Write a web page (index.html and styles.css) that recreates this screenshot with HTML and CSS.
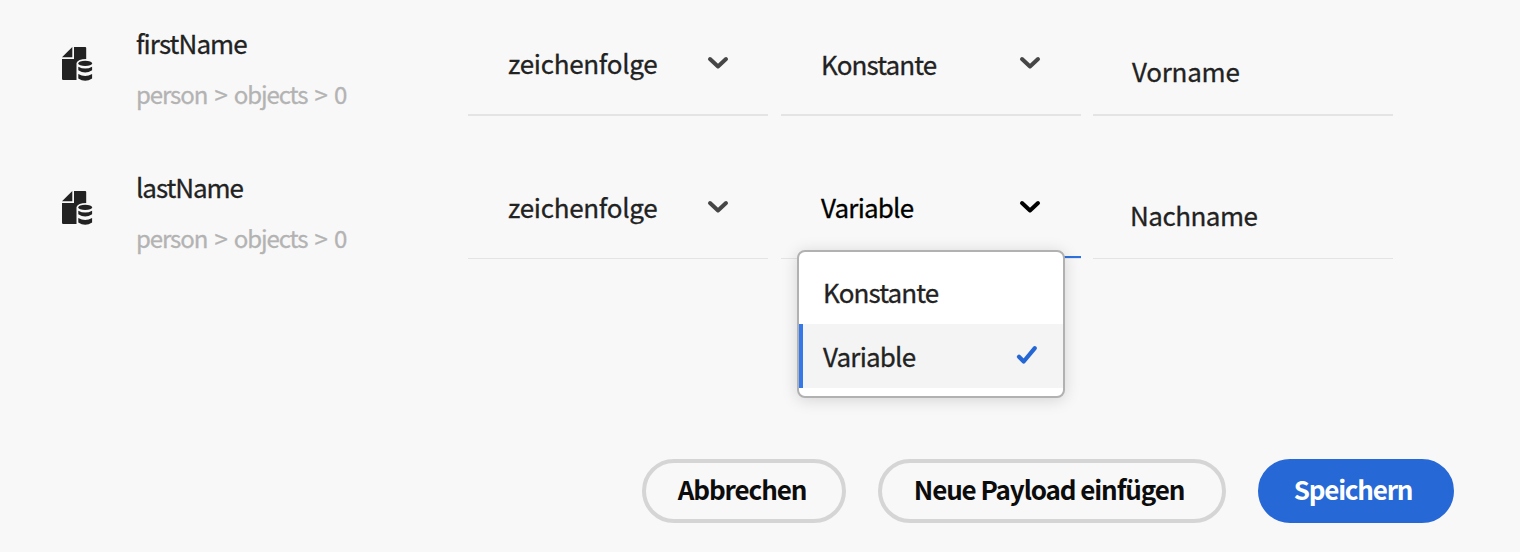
FILE: index.html
```html
<!DOCTYPE html>
<html lang="de">
<head>
<meta charset="utf-8">
<title>Payload</title>
<link rel="stylesheet" href="styles.css">
</head>
<body>
<svg class="defs" width="0" height="0" aria-hidden="true">
  <symbol id="data-doc" viewBox="0 0 32 36">
    <path d="M0 10.3 10.3 0v10.3z"/>
    <path d="M12 0h11.2q1 0 1 1v11Q16 12.200 14.500 16V33H1.200Q0 33 0 31.800V12h12z"/>
    <ellipse cx="23.200" cy="16.400" rx="6.900" ry="2.700"/>
    <path d="M16.300 19.700q6.900 3.800 13.800 0V23.200q-6.900 4.400-13.800 0zM16.300 26.900q6.900 4 13.800 0V31.500q-6.900 4.600-13.800 0z"/>
  </symbol>
  <symbol id="chevron" viewBox="0 0 22 14">
    <path d="M3 3 11 10.500 19 3" fill="none" stroke="currentColor" stroke-width="4" stroke-linecap="round" stroke-linejoin="round"/>
  </symbol>
</svg>
<main class="payload">
  <section class="row row-first">
    <svg class="doc-icon"><use href="#data-doc"/></svg>
    <div class="label"><div class="name first">firstName</div><div class="path">person &gt; objects &gt; 0</div></div>
    <div class="field select"><span class="type">zeichenfolge</span><svg class="chevron"><use href="#chevron"/></svg></div>
    <div class="field select"><span class="constant">Konstante</span><svg class="chevron"><use href="#chevron"/></svg></div>
    <div class="field input"><span class="value-first">Vorname</span></div>
  </section>
  <section class="row row-last">
    <svg class="doc-icon"><use href="#data-doc"/></svg>
    <div class="label"><div class="name last">lastName</div><div class="path">person &gt; objects &gt; 0</div></div>
    <div class="field select"><span class="type">zeichenfolge</span><svg class="chevron"><use href="#chevron"/></svg></div>
    <div class="field select open"><span class="variable">Variable</span><svg class="chevron"><use href="#chevron"/></svg>
      <div class="menu">
        <div class="option"><span class="constant">Konstante</span></div>
        <div class="option selected"><span class="variable">Variable</span><svg class="check" viewBox="0 0 22 20"><path d="M3 10.700 7.700 15.500 18.800 2.200" fill="none" stroke="currentColor" stroke-width="4.200" stroke-linecap="round" stroke-linejoin="round"/></svg></div>
      </div>
    </div>
    <div class="field input"><span class="value-last">Nachname</span></div>
  </section>
  <footer class="actions">
    <button class="btn cancel">Abbrechen</button>
    <button class="btn paste">Neue Payload einfügen</button>
    <button class="btn save">Speichern</button>
  </footer>
</main>
</body>
</html>
```
FILE: styles.css
```css
* { box-sizing: border-box; }
body {
  margin: 0;
  background: #f8f8f8;
  color: #222;
  font-family: "Noto Sans CJK SC", "Noto Sans", sans-serif;
  font-size: 26px;
  -webkit-text-stroke: 0.3px currentColor;
  overflow: hidden;
}
.defs { position: absolute; }
.payload { width: 1520px; height: 552px; display: flex; flex-direction: column; }
.row {
  display: grid;
  grid-template-columns: 74px 332px 300px 300px 300px;
  padding-left: 62px;
  height: 144px;
  align-items: end;
  flex: none;
}
.row-first { height: 116px; }
.doc-icon { width: 32px; height: 36px; fill: #222; margin-bottom: 33px; }
.label { line-height: 50px; height: 98px; white-space: nowrap; }
.first { letter-spacing: -0.9px; }
.last { letter-spacing: -1.05px; }
.path { color: #b3b3b3; font-size: 24px; line-height: 52px; letter-spacing: -1.1px; word-spacing: 2.9px; }
.type { letter-spacing: -0.3px; }
.constant { letter-spacing: -0.9px; }
.variable { letter-spacing: -0.8px; }
.value-first { letter-spacing: -0.25px; }
.value-last { letter-spacing: -0.5px; }
.field { height: 96px; border-bottom: 2px solid #e4e4e4; line-height: 50px; white-space: nowrap; }
.row-last .field { height: 95px; border-bottom-width: 1px; margin-bottom: 1px; }
.select { display: flex; justify-content: space-between; padding: 18px 39px 0 40px; }
.field:nth-child(4) { margin-left: 13px; margin-right: -13px; padding-right: 40px; }
.field:nth-child(5) { margin-left: 25px; margin-right: -25px; }
.row-first .constant { padding-top: 1px; }
.input { padding: 26px 39px 0; }
.row-last .input { padding-left: 38px; }
.value-last { margin-left: -1px; }
.chevron { width: 22px; height: 14px; margin-top: 18px; color: #464646; }
.open { position: relative; color: #000; }
.open .chevron { color: #000; }
.open::after {
  content: "";
  position: absolute;
  right: 0;
  bottom: 0;
  width: 18px;
  height: 2px;
  background: #2d72df;
}
.menu {
  position: absolute;
  z-index: 1;
  top: 86px;
  left: 16px;
  width: 268px;
  height: 148px;
  padding-top: 8px;
  background: #fff;
  border: 2px solid #b1b1b1;
  border-radius: 8px;
  box-shadow: 0 2px 16px rgba(0, 0, 0, .15);
  color: #222;
}
.option { height: 64px; padding: 0 25px 0 24px; line-height: 64px; display: flex; justify-content: space-between; align-items: center; }
.selected { background: #f4f4f4; border-left: 4px solid #3578ea; padding-left: 20px; }
.check { width: 22px; height: 20px; color: #2467d4; overflow: visible; }
.actions { margin: 199px 66px 0 auto; display: flex; gap: 32px; }
.btn {
  height: 64px;
  border: 4px solid #d5d5d5;
  border-radius: 32px;
  background: transparent;
  color: #0c0c0c;
  font: 700 26px/52px "Noto Sans CJK SC", "Noto Sans", sans-serif;
  letter-spacing: -1.1px;
  -webkit-text-stroke: 0;
  padding: 0 6px 4px 0;
  white-space: nowrap;
}
.cancel { width: 204px; padding: 0 4px 6px 0; }
.paste { width: 348px; }
.save { width: 196px; background: #2668d6; border-color: #2668d6; color: #fff; letter-spacing: -1.2px; }
```
